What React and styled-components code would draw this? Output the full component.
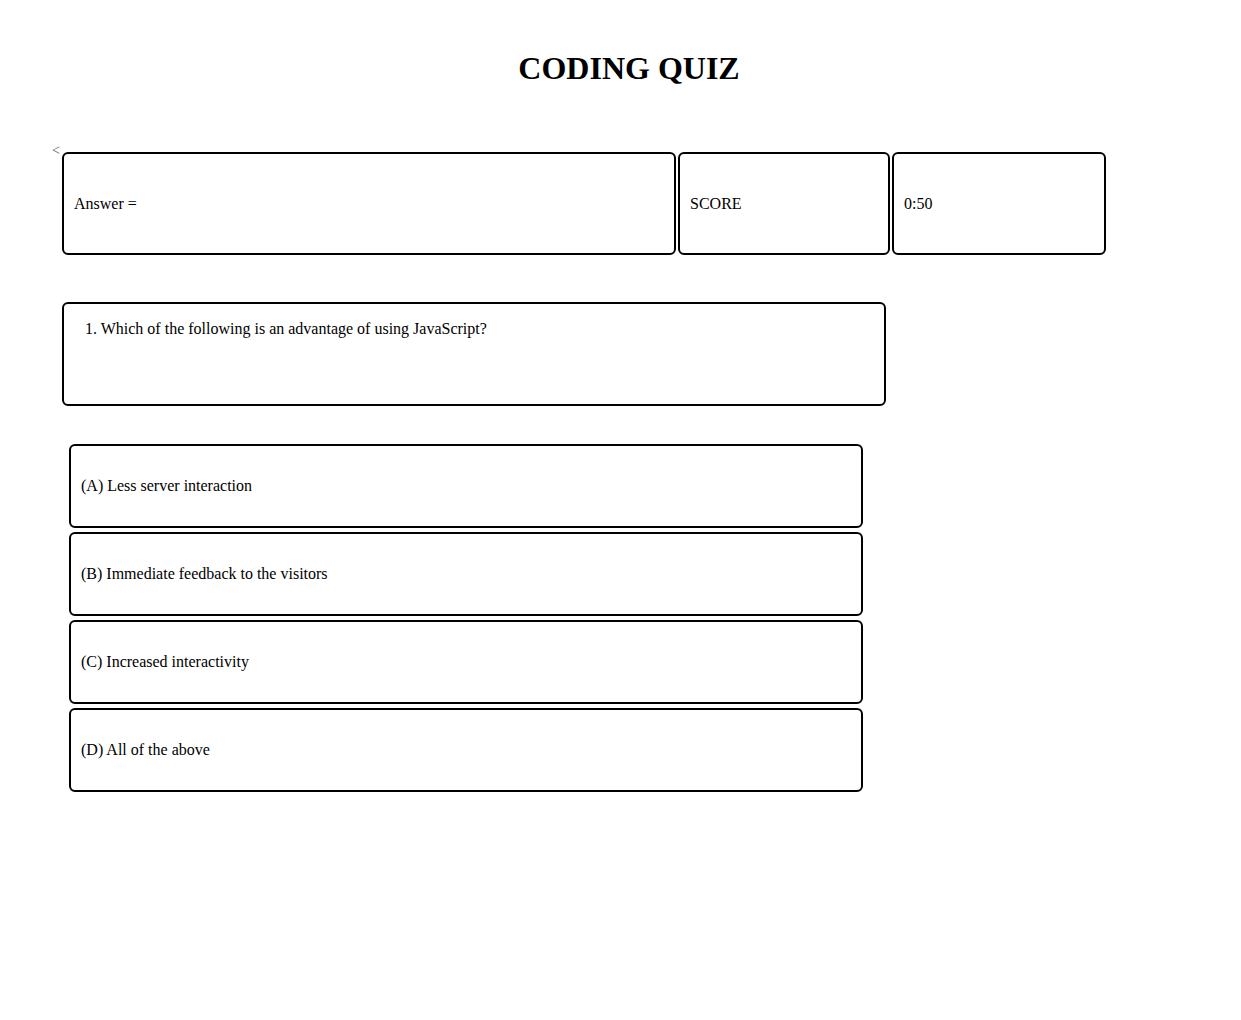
import React from 'react';
import styled, { createGlobalStyle } from 'styled-components';

const GlobalStyle = createGlobalStyle`
  body {
    margin: 0;
    background: #fff;
    font-family: "Liberation Serif", "Times New Roman", serif;
    color: #000;
  }
`;

const Page = styled.div`
  width: 1241px;
  padding: 50px 0 0 0;
`;

const Title = styled.h1`
  margin: 0 0 0 17px;
  text-align: center;
  font-size: 32px;
  font-weight: bold;
  line-height: 37px;
`;

const TopRow = styled.div`
  display: flex;
  align-items: flex-start;
  margin-top: 65px;
  padding-left: 52px;
`;

const Back = styled.span`
  font-size: 14px;
  line-height: 14px;
  color: #555;
  margin-top: -8px;
  width: 10px;
`;

const Boxes = styled.div`
  display: flex;
  gap: 2px;
`;

const InfoBox = styled.div`
  box-sizing: border-box;
  width: ${p => p.w}px;
  height: 103px;
  border: 2px solid #000;
  border-radius: 6px;
  display: flex;
  align-items: center;
  padding-left: 10px;
  font-size: 16px;
`;

const QuestionBox = styled.div`
  box-sizing: border-box;
  width: 824px;
  height: 104px;
  margin: 47px 0 0 62px;
  border: 2px solid #000;
  border-radius: 6px;
  padding: 15px 21px;
  font-size: 16px;
  line-height: 20px;
`;

const Options = styled.div`
  display: flex;
  flex-direction: column;
  gap: 4px;
  margin: 38px 0 0 69px;
`;

const Option = styled.div`
  box-sizing: border-box;
  width: 794px;
  height: 84px;
  border: 2px solid #000;
  border-radius: 6px;
  display: flex;
  align-items: center;
  padding-left: 10px;
  font-size: 16px;
`;

const options = [
  '(A) Less server interaction',
  '(B) Immediate feedback to the visitors',
  '(C) Increased interactivity',
  '(D) All of the above',
];

export default function App() {
  return (
    <Page>
      <GlobalStyle />
      <Title>CODING QUIZ</Title>
      <TopRow>
        <Back>&lt;</Back>
        <Boxes>
          <InfoBox w={614}>Answer =</InfoBox>
          <InfoBox w={212}>SCORE</InfoBox>
          <InfoBox w={214}>0:50</InfoBox>
        </Boxes>
      </TopRow>
      <QuestionBox>1. Which of the following is an advantage of using JavaScript?</QuestionBox>
      <Options>
        {options.map(o => (
          <Option key={o}>{o}</Option>
        ))}
      </Options>
    </Page>
  );
}
